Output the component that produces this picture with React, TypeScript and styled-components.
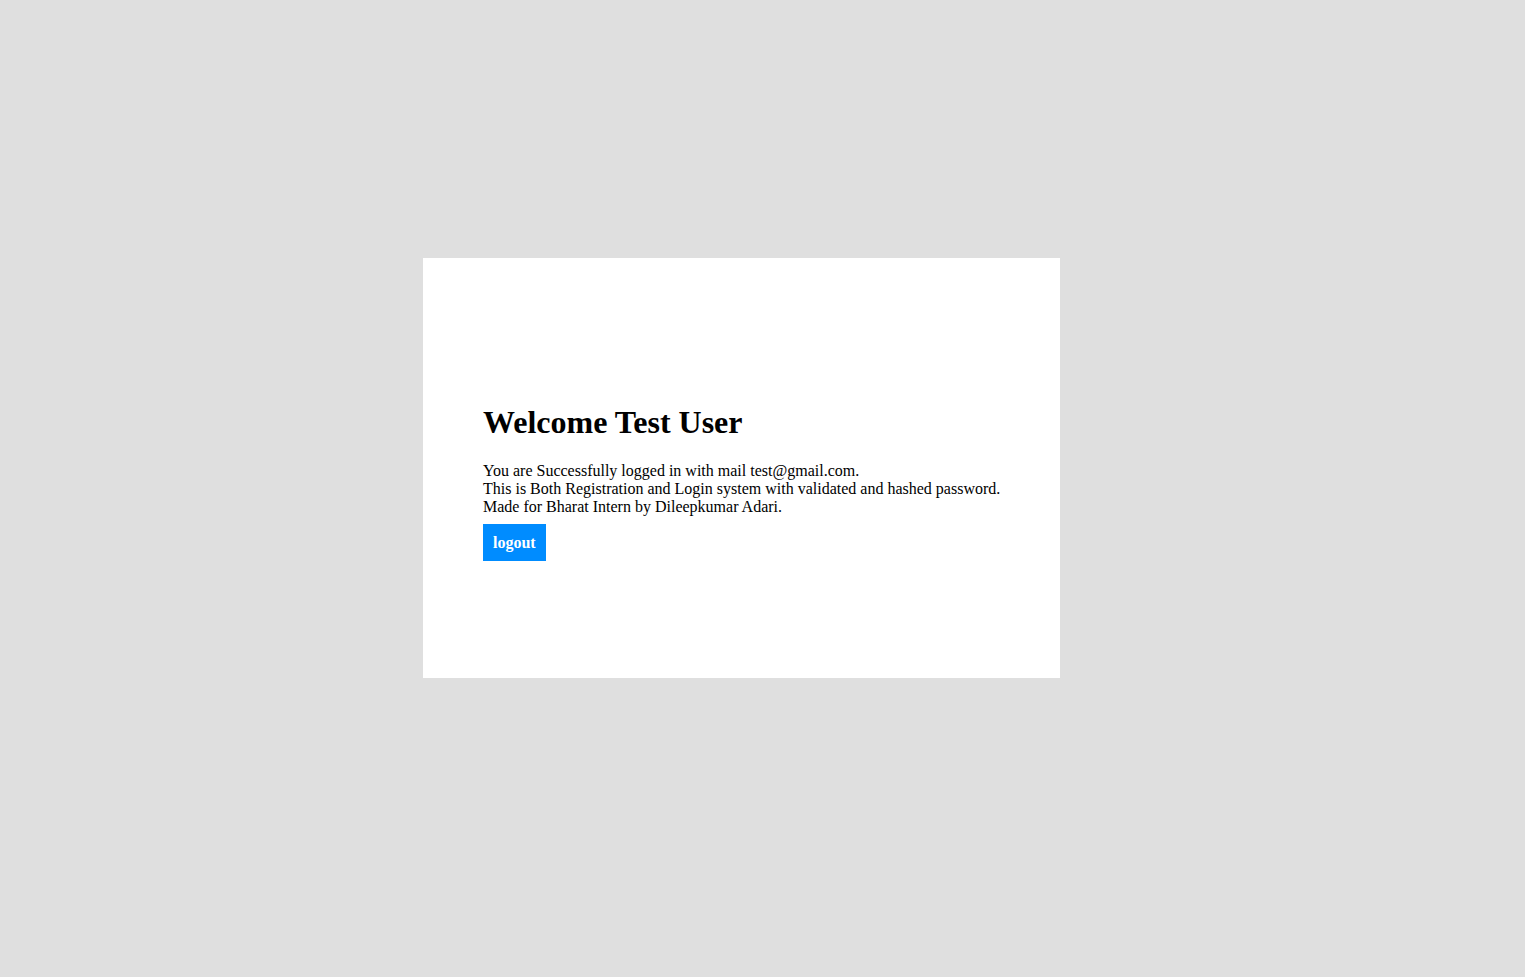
import React from "react";
import styled, { createGlobalStyle } from "styled-components";

const Global = createGlobalStyle`
  html, body { margin: 0; padding: 0; }
  body {
    background: #dfdfdf;
    font-family: "Liberation Serif", "Times New Roman", serif;
    color: #000;
  }
`;

const Page = styled.div`
  min-height: 100vh;
  box-sizing: border-box;
  display: flex;
  justify-content: center;
  align-items: center;
  padding: 0 42px 41px 0;
`;

const Card = styled.div`
  width: 637px;
  height: 420px;
  box-sizing: border-box;
  background: #ffffff;
  padding: 146px 40px 0 60px;
  display: flex;
  flex-direction: column;
  align-items: flex-start;
`;

const Title = styled.h1`
  margin: 0 0 22px;
  font-size: 32px;
  font-weight: bold;
  line-height: 36px;
`;

const Text = styled.p`
  margin: 0 0 8px;
  font-size: 16px;
  line-height: 18px;
  white-space: nowrap;
`;

const Button = styled.button`
  border: none;
  background: #008cff;
  color: #fff;
  font-family: "Liberation Serif", "Times New Roman", serif;
  font-weight: bold;
  font-size: 16px;
  line-height: 17px;
  padding: 10px 10px;
  cursor: pointer;
`;

export default function App() {
  return (
    <>
      <Global />
      <Page>
        <Card>
          <Title>Welcome Test User</Title>
          <Text>
            You are Successfully logged in with mail test@gmail.com.
            <br />
            This is Both Registration and Login system with validated and hashed password.
            <br />
            Made for Bharat Intern by Dileepkumar Adari.
          </Text>
          <Button>logout</Button>
        </Card>
      </Page>
    </>
  );
}
